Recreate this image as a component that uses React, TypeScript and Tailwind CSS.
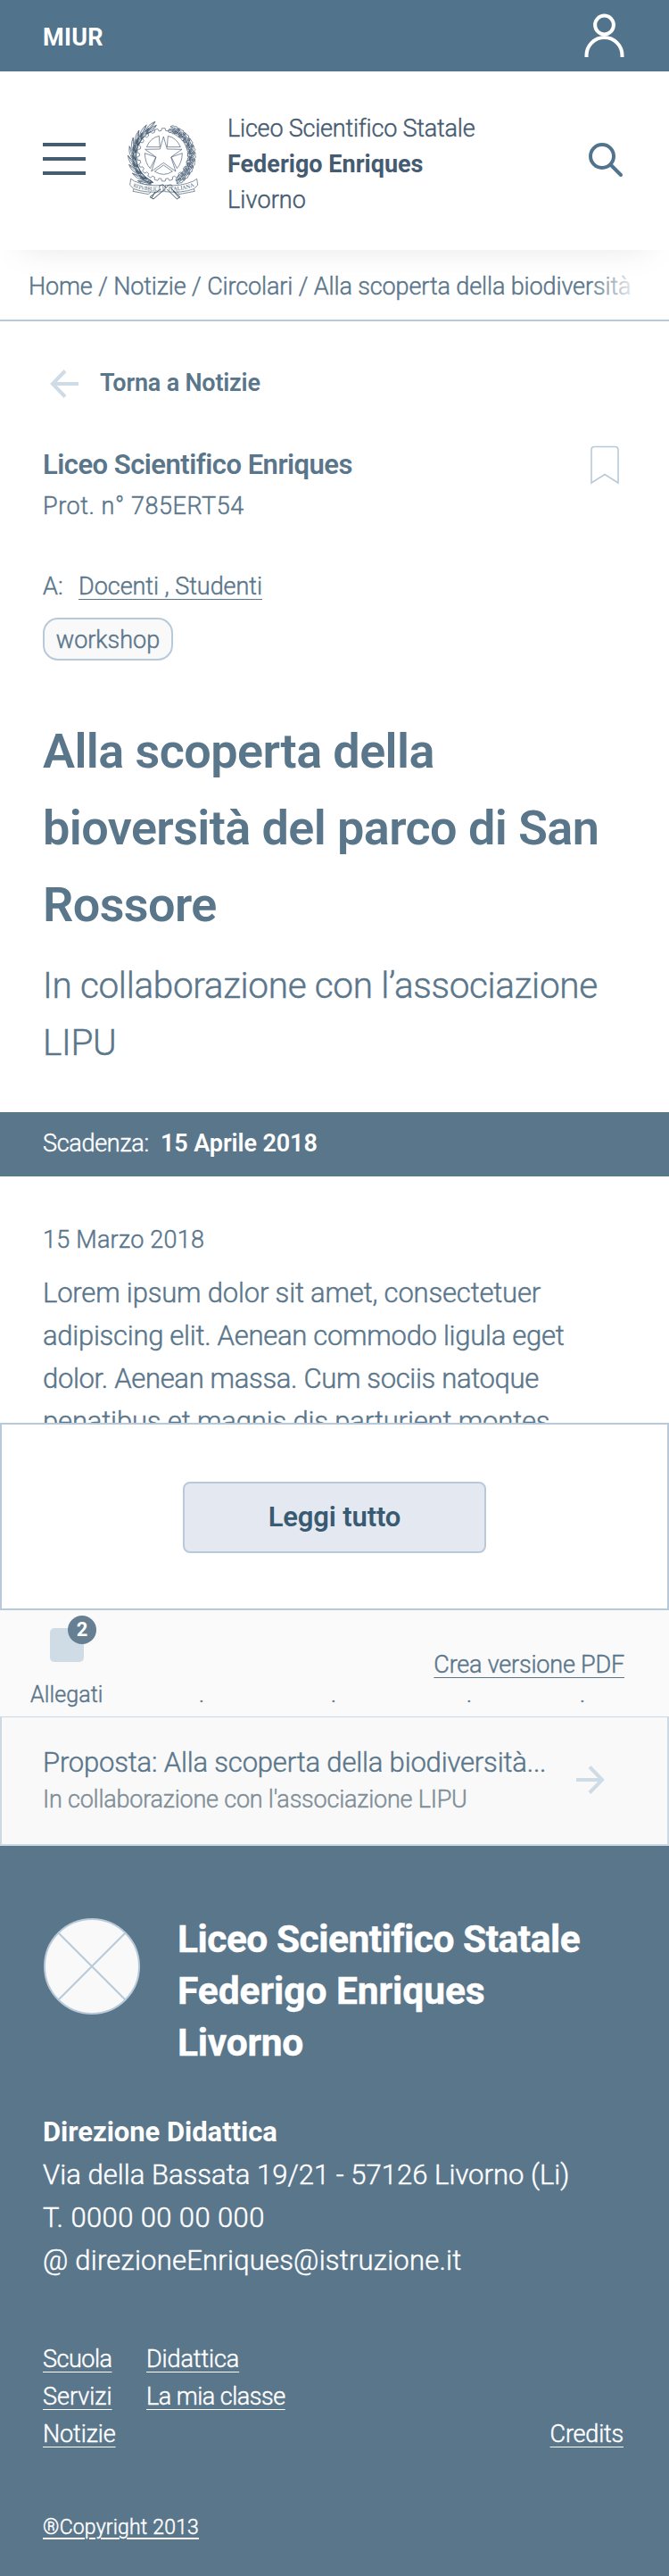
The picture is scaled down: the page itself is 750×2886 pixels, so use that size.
import React from "react";

const point = (cx: number, cy: number, r: number, deg: number): string => {
  const a = (deg * Math.PI) / 180;
  return `${(cx + r * Math.cos(a)).toFixed(1)} ${(cy + r * Math.sin(a)).toFixed(1)}`;
};

const TEETH = 22;
const gearPath =
  Array.from({ length: TEETH }, (_, i) => {
    const step = 360 / TEETH;
    const a = i * step - 90;
    return [
      point(160, 160, 89, a - step * 0.22),
      point(160, 160, 89, a + step * 0.22),
      point(160, 160, 81, a + step * 0.32),
      point(160, 160, 81, a + step * 0.68),
    ]
      .map((p, j) => `${i === 0 && j === 0 ? "M" : "L"}${p}`)
      .join(" ");
  }).join(" ") + " Z";

const laurel = Array.from({ length: 9 }, (_, i) => 122 + i * 15);
const oak = Array.from({ length: 10 }, (_, i) => 56 - i * 13.5);

function Emblem() {
  return (
    <svg viewBox="0 0 330 360" className="h-[120px] w-[110px] shrink-0" fill="none" stroke="#455b71" strokeWidth="2" strokeLinejoin="round">
      <path d={gearPath} />
      <path d="M160 99 L172 141 L222 142 L185 168 L201 216 L160 187 L119 216 L135 168 L98 142 L148 141 Z" />
      <path d="M103 134 Q116 103 145 97 L148 134 Z M217 134 Q204 103 175 97 L172 134 Z M97 155 Q98 188 115 206 L134 168 Z M223 155 Q222 188 205 206 L186 168 Z M130 216 Q160 236 190 216 L160 195 Z" />
      {laurel.map((deg, i) => (
        <g key={deg} transform={`translate(${point(160, 165, 99, deg).replace(" ", ",")}) rotate(${deg + 90})`}>
          <path d="M-16 5 Q0 12 28 -4 Q4 -9 -16 5 Z M-16 5 L26 -3" />
          <path d="M-14 -2 Q0 -20 30 -17 Q12 -3 -14 -2 Z M-14 -2 L26 -16" />
          <path d="M-18 5 L18 8 M-14 2 L10 -4" strokeWidth={i < 7 ? 3 : 1.5} />
        </g>
      ))}
      {oak.map((deg) => (
        <g key={deg} transform={`translate(${point(160, 165, 97, deg).replace(" ", ",")}) rotate(${deg - 90})`}>
          <path d="M-14 4 Q-10 12 -4 8 Q0 15 7 9 Q14 13 20 4 Q14 -3 7 0 Q0 -6 -5 0 Q-12 -3 -14 4 Z M-14 4 L16 4" />
          <path d="M-12 -4 Q-10 -13 -3 -10 Q2 -19 9 -14 Q17 -20 22 -13 Q18 -4 10 -6 Q4 0 -2 -4 Z M-12 -4 L18 -12" />
          <circle cx="2" cy="-2" r="4" />
        </g>
      ))}
      <path d="M50 241 L62 249 Q105 268 158 262 L160 284 Q100 290 60 275 L47 262 Z M272 241 L260 249 Q216 268 166 262 L164 284 Q222 290 262 275 L275 262 Z" fill="#fff" />
      <path d="M60 275 L57 283 L110 293 L118 284 M262 275 L265 283 L212 293 L206 284" />
      <path d="M150 276 L114 302 L126 309 L164 276 M172 276 L205 309 L216 302 L184 272 M144 268 Q160 252 168 272 Q178 256 190 264 M132 284 L120 306 M192 282 L212 304" strokeWidth="3" />
      <path id="motto-left" d="M57 268 Q100 285 154 280" stroke="none" />
      <path id="motto-right" d="M176 280 Q228 283 268 264" stroke="none" />
      <text fill="#455b71" stroke="none" fontSize="19" fontFamily="Liberation Serif, serif">
        <textPath href="#motto-left" textLength="97" lengthAdjust="spacingAndGlyphs">REPVBBLICA</textPath>
      </text>
      <text fill="#455b71" stroke="none" fontSize="19" fontFamily="Liberation Serif, serif">
        <textPath href="#motto-right" textLength="90" lengthAdjust="spacingAndGlyphs">ITALIANA</textPath>
      </text>
    </svg>
  );
}

function Arrow({ className }: { className: string }) {
  return (
    <svg viewBox="0 0 32 32" className={`h-8 w-8 shrink-0 ${className}`} fill="none" stroke="#cfdce6" strokeWidth="4">
      <path d="M0 16 H29 M15 1.5 L29 16 L15 30.5" />
    </svg>
  );
}

function FooterLink({ children, className = "" }: { children: string; className?: string }) {
  return (
    <a href="#" className={`underline decoration-1 underline-offset-[5px] [text-decoration-skip-ink:none] ${className}`}>
      {children}
    </a>
  );
}

export default function App() {
  return (
    <div className="w-[750px] overflow-hidden bg-white font-[Roboto,sans-serif] text-[27px] leading-10 font-light text-[#5a768b] [-webkit-text-stroke:0.45px]">
      <div className="flex h-20 items-center justify-between bg-[#51748c] pr-[50px] pl-12 text-white">
        <span className="pt-1 font-bold tracking-[0.3px] [-webkit-text-stroke:0px]">MIUR</span>
        <svg viewBox="0 0 45 50" className="mb-[1px] h-[50px] w-[45px]" fill="none" stroke="#fff" strokeWidth="4">
          <circle cx="22.5" cy="13" r="10.4" />
          <path d="M2.5 49 V47 A20 20 0 0 1 42.5 47 V49" />
        </svg>
      </div>

      <header className="relative z-10 flex h-[200px] items-center bg-white pl-12 text-[#455b71] shadow-[0_16px_40px_-24px_rgba(0,0,0,0.14)]">
        <div className="mb-1 flex w-12 flex-col gap-3">
          <span className="h-1 bg-[#455b71]" />
          <span className="h-1 bg-[#455b71]" />
          <span className="h-1 bg-[#455b71]" />
        </div>
        <div className="ml-[34px]">
          <Emblem />
        </div>
        <div className="ml-[15px] flex flex-col pt-2 whitespace-nowrap">
          <span className="tracking-[-0.2px]">Liceo Scientifico Statale</span>
          <span className="font-bold [-webkit-text-stroke:0px]">Federigo Enriques</span>
          <span className="tracking-[0.1px]">Livorno</span>
        </div>
        <svg viewBox="0 0 40 40" className="mr-[51px] ml-auto h-10 w-10" fill="none" stroke="#51748c" strokeWidth="4" strokeLinecap="round">
          <circle cx="16" cy="15" r="13" />
          <path d="M25.5 24.5 L37 36" />
        </svg>
      </header>

      <nav className="relative flex h-20 items-center border-b-2 border-[#b8cad9] pt-[3px] pl-8 tracking-[-0.12px] whitespace-nowrap">
        <span>Home / Notizie / Circolari / Alla scoperta della biodiversità</span>
        <span className="absolute top-0 left-[660px] h-[78px] w-[58px] bg-linear-to-r from-white/0 to-white" />
      </nav>

      <main>
        <section className="px-12 pt-[45px]">
          <a href="#" className="flex h-12 items-center font-semibold tracking-[-0.2px] [-webkit-text-stroke:0px]">
            <Arrow className="mt-[2px] ml-[8px] rotate-180" />
            <span className="ml-6">Torna a Notizie</span>
          </a>

          <div className="mt-11 flex justify-between pr-[8px]">
            <div>
              <h2 className="text-[31px] leading-[48px] font-semibold tracking-[-0.52px] [-webkit-text-stroke:0px]">Liceo Scientifico Enriques</h2>
              <p className="mt-[2px] tracking-[0.55px]">Prot. n° 785ERT54</p>
            </div>
            <svg viewBox="0 0 32 44" className="mt-[2px] h-11 w-8" fill="none" stroke="#b8cad9" strokeWidth="1.6">
              <path d="M1 42 V5 Q1 1.5 4.5 1.5 H27.5 Q31 1.5 31 5 V42 L16 32.5 Z" />
            </svg>
          </div>

          <p className="mt-[50px] flex">
            <span className="w-10">A:</span>
            <a href="#" className="tracking-[-0.04px] underline decoration-1 underline-offset-[5px] [text-decoration-skip-ink:none]">
              Docenti , Studenti
            </a>
          </p>
          <span className="mt-[15px] flex h-12 w-[146px] items-center justify-center rounded-[17px] border-2 border-[#b8cad9] bg-[#f9f9f9] pt-[2px]">
            workshop
          </span>

          <h1 className="mt-[59px] text-[54px] leading-[86px] font-semibold tracking-[-0.6px] whitespace-nowrap [-webkit-text-stroke:0px]">
            Alla scoperta della
            <br />
            bioversità del parco di San
            <br />
            Rossore
          </h1>
          <p className="mt-[15px] text-[40.5px] leading-[64px] tracking-[-0.33px] whitespace-nowrap">
            In collaborazione con l’associazione
            <br />
            LIPU
          </p>
        </section>

        <div className="mt-[46px] flex h-[72px] items-center bg-[#5a768b] px-12 pb-[2px] text-white">
          <span className="w-[132px] tracking-[-0.3px]">Scadenza:</span>
          <span className="font-semibold tracking-[-0.1px] [-webkit-text-stroke:0px]">15 Aprile 2018</span>
        </div>

        <section className="h-[276px] overflow-hidden px-12 pt-[51px]">
          <p className="tracking-[0.25px]">15 Marzo 2018</p>
          <p className="mt-4 text-[31px] leading-[48px] tracking-[-0.15px] whitespace-nowrap">
            <span className="tracking-[-0.18px]">Lorem ipsum dolor sit amet, consectetuer</span>
            <br />
            <span className="tracking-[-0.28px]">adipiscing elit. Aenean commodo ligula eget</span>
            <br />
            <span className="tracking-[-0.33px]">dolor. Aenean massa. Cum sociis natoque</span>
            <br />
            penatibus et magnis dis parturient montes,
          </p>
        </section>

        <div className="flex h-[210px] items-center justify-center border-2 border-[#b8cad9] bg-white pt-[2px]">
          <button className="h-20 w-[340px] rounded-lg border-2 border-[#b8cad9] bg-[#e4e9f1] text-[31px] font-semibold tracking-[-0.15px] text-[#395a73] [-webkit-text-stroke:0px]">
            Leggi tutto
          </button>
        </div>

        <section className="h-[119px] bg-[#fafafa]">
          <div className="flex h-[81px] items-start justify-between pr-[50px] pl-14">
            <div className="relative mt-5 h-[38px] w-[38px] rounded-[5px] bg-[#cfdce6]">
              <span className="absolute -top-[14px] left-5 flex h-8 w-8 items-center justify-center rounded-full bg-[#667f93] text-[22px] font-bold text-white [-webkit-text-stroke:0px]">
                2
              </span>
            </div>
            <a href="#" className="self-end tracking-[-0.2px] underline decoration-1 underline-offset-[5px] [text-decoration-skip-ink:none]">
              Crea versione PDF
            </a>
          </div>
          <div className="-mt-[2px] flex pl-[34px] text-[25px] leading-8">
            <span className="w-[189px] tracking-[0.1px]">Allegati</span>
            <span className="w-[148px]">.</span>
            <span className="w-[152px]">.</span>
            <span className="w-[127px]">.</span>
            <span>.</span>
          </div>
        </section>

        <a href="#" className="flex h-[145px] items-start justify-between border-x-2 border-t border-b-2 border-[#ccd9e3] bg-[#f9f9f9] pt-[29px] pr-[70px] pl-[46px] whitespace-nowrap">
          <div>
            <p className="text-[31px] leading-[44px] tracking-[-0.18px]">Proposta: Alla scoperta della biodiversità...</p>
            <p className="leading-[38px] tracking-[-0.22px] text-[#7f8e98]">In collaborazione con l'associazione LIPU</p>
          </div>
          <Arrow className="mt-[25px]" />
        </a>
      </main>

      <footer className="h-[818px] bg-[#5a768b] px-12 pt-[76px] text-white">
        <div className="flex items-start">
          <svg viewBox="0 0 110 110" className="mt-1 h-[110px] w-[110px]" fill="#f9f9f9" stroke="#b8cad9" strokeWidth="2">
            <circle cx="55" cy="55" r="53" />
            <path d="M17.5 17.5 L92.5 92.5 M92.5 17.5 L17.5 92.5" />
          </svg>
          <div className="ml-[41px] flex flex-col text-[42.5px] leading-[58px] font-bold">
            <span className="tracking-[-0.5px]">Liceo Scientifico Statale</span>
            <span className="tracking-[-0.05px]">Federigo Enriques</span>
            <span className="tracking-[-0.25px]">Livorno</span>
          </div>
        </div>

        <div className="mt-[47px] flex flex-col text-[31px] leading-[48px]">
          <span className="font-bold tracking-[-0.05px] [-webkit-text-stroke:0px]">Direzione Didattica</span>
          <span className="tracking-[0.03px]">Via della Bassata 19/21 - 57126 Livorno (Li)</span>
          <span className="tracking-[0.4px]">T. 0000 00 00 000</span>
          <span className="tracking-[0.22px]">@ direzioneEnriques@istruzione.it</span>
        </div>

        <div className="mt-[65px] flex pr-[3px] leading-[42px]">
          <div className="flex w-[116px] flex-col items-start">
            <FooterLink className="tracking-[-0.5px]">Scuola</FooterLink>
            <FooterLink>Servizi</FooterLink>
            <FooterLink className="tracking-[-0.1px]">Notizie</FooterLink>
          </div>
          <div className="flex flex-col items-start">
            <FooterLink className="tracking-[-0.1px]">Didattica</FooterLink>
            <FooterLink className="tracking-[-0.5px]">La mia classe</FooterLink>
          </div>
          <FooterLink className="ml-auto self-end tracking-[-0.2px]">Credits</FooterLink>
        </div>

        <p className="mt-[68px] text-[23px] leading-8 tracking-[0.19px]">
          <a href="#" className="underline decoration-2 underline-offset-[4px]">®Copyright 2013</a>
        </p>
      </footer>
    </div>
  );
}
